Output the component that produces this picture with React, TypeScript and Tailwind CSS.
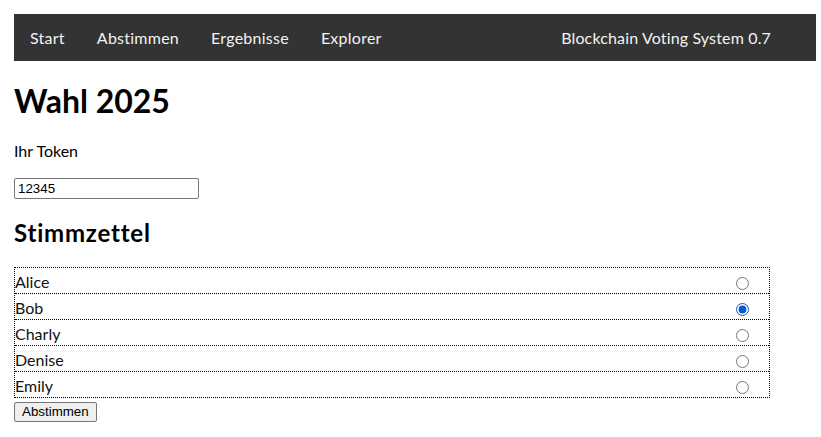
import React, { useState } from 'react';

const candidates = ['Alice', 'Bob', 'Charly', 'Denise', 'Emily'];
const navLinks = ['Start', 'Abstimmen', 'Ergebnisse', 'Explorer'];

export default function App() {
  const [choice, setChoice] = useState('Bob');
  const [token, setToken] = useState('12345');

  return (
    <div className="bg-white text-black font-['Lato',sans-serif] pt-[14px] pl-[14px] min-h-[437px]">
      <nav className="w-[802px] h-[47px] bg-[#333333] flex items-center text-[16px] text-[#f2f2f2]">
        <div className="flex tracking-[0.25px]">
          {navLinks.map((link) => (
            <a key={link} href="#" className="px-[16px] leading-[47px] hover:bg-[#111]">
              {link}
            </a>
          ))}
        </div>
        <span className="ml-auto mr-[45px] tracking-[0.15px]">Blockchain Voting System 0.7</span>
      </nav>

      <h1 className="text-[32px] font-bold leading-[38px] mt-[21px]">Wahl 2025</h1>

      <p className="text-[16px] leading-[20px] mt-[21px]">Ihr Token</p>

      <input
        type="text"
        value={token}
        onChange={(e) => setToken(e.target.value)}
        className="mt-[17px] block w-[185px] h-[21px] border border-[#767676] rounded-[2px] px-[3px] text-[13.33px] font-['Liberation_Sans',Arial,sans-serif] leading-none"
      />

      <h2 className="text-[24px] font-bold leading-[28px] mt-[20px] tracking-[0.8px]">Stimmzettel</h2>

      <div className="mt-[20px] w-[756px] border border-dotted border-black">
        {candidates.map((name, i) => (
          <label
            key={name}
            className={`flex items-center text-[16px] text-[#111] ${
              i < candidates.length - 1 ? 'border-b border-dotted border-black h-[26px]' : 'h-[25px]'
            }`}
          >
            <span className="flex-1 pt-[3px]">{name}</span>
            <input
              type="radio"
              name="candidate"
              checked={choice === name}
              onChange={() => setChoice(name)}
              className="w-[13px] h-[13px] mt-[5px] mr-[20px] accent-[#0b57d0]"
            />
          </label>
        ))}
      </div>

      <button className="mt-[1px] h-[20px] px-[7px] border border-[#767676] rounded-[2px] bg-[#efefef] text-[13.33px] font-['Liberation_Sans',Arial,sans-serif] leading-none">
        Abstimmen
      </button>
    </div>
  );
}
